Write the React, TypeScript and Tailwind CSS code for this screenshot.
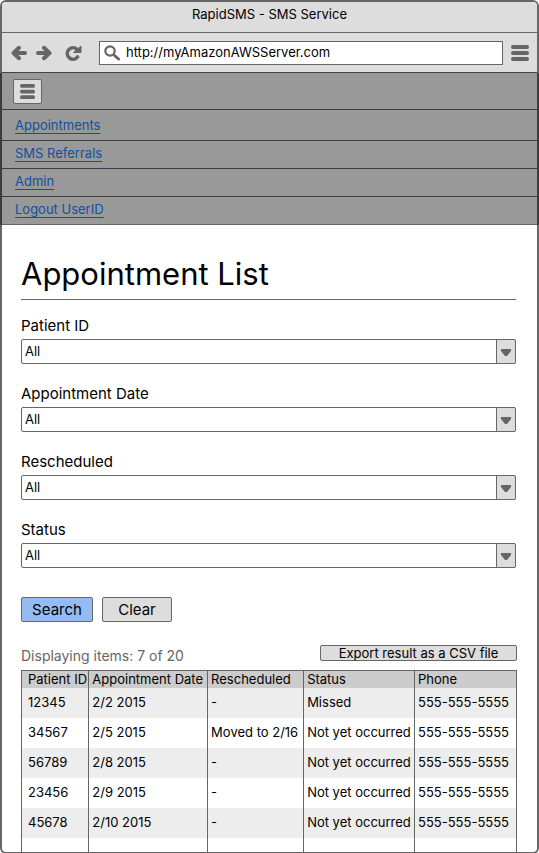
import { FC } from "react";

interface Appointment {
  patientId: string;
  date: string;
  rescheduled: string;
  status: string;
  phone: string;
}

const links = ["Appointments", "SMS Referrals", "Admin", "Logout UserID"];

const filters = ["Patient ID", "Appointment Date", "Rescheduled", "Status"];

const columns = [
  { name: "Patient ID", width: "w-[13.6%]" },
  { name: "Appointment Date", width: "w-[24%]" },
  { name: "Rescheduled", width: "w-[19.4%]" },
  { name: "Status", width: "w-[22.4%]" },
  { name: "Phone", width: "w-[20.6%]" },
];

const appointments: Appointment[] = [
  { patientId: "12345", date: "2/2 2015", rescheduled: "-", status: "Missed", phone: "555-555-5555" },
  { patientId: "34567", date: "2/5 2015", rescheduled: "Moved to 2/16", status: "Not yet occurred", phone: "555-555-5555" },
  { patientId: "56789", date: "2/8 2015", rescheduled: "-", status: "Not yet occurred", phone: "555-555-5555" },
  { patientId: "23456", date: "2/9 2015", rescheduled: "-", status: "Not yet occurred", phone: "555-555-5555" },
  { patientId: "45678", date: "2/10 2015", rescheduled: "-", status: "Not yet occurred", phone: "555-555-5555" },
];

const ArrowIcon: FC<{ className?: string }> = ({ className }) => (
  <svg
    viewBox="0 0 16 16"
    fill="none"
    stroke="#666"
    strokeWidth="4"
    strokeLinecap="round"
    strokeLinejoin="round"
    className={`h-4 w-4 ${className ?? ""}`}
  >
    <path d="M14 8H3M8 2.800L2.500 8 8 13.200" />
  </svg>
);

const ReloadIcon = () => (
  <svg viewBox="0 0 17 16" className="h-4 w-[17px]">
    <path d="M11.500 4A5.700 5.700 0 1 0 12.500 12" fill="none" stroke="#666" strokeWidth="3.600" strokeLinecap="round" />
    <path d="M16 1v6.500H8.500z" fill="#666" stroke="#666" strokeLinejoin="round" />
  </svg>
);

const SearchIcon = () => (
  <svg viewBox="0 0 16 16" fill="none" stroke="#666" className="h-4 w-4 shrink-0">
    <circle cx="6" cy="6" r="4.700" strokeWidth="2.200" />
    <path d="M10 10l4.500 4" strokeWidth="3" strokeLinecap="round" />
  </svg>
);

const MenuIcon: FC<{ className: string }> = ({ className }) => (
  <svg viewBox="0 0 18 16" preserveAspectRatio="none" className={className}>
    <rect y="0" width="18" height="4" rx="2" fill="#666" />
    <rect y="6" width="18" height="4" rx="2" fill="#666" />
    <rect y="12" width="18" height="4" rx="2" fill="#666" />
  </svg>
);

const BrowserBar = () => (
  <header className="rounded-t-sm bg-[#ddd]">
    <div className="h-[31px] border-b border-[#666] text-center leading-6">
      RapidSMS - SMS Service
    </div>
    <div className="flex h-10 items-center border-b border-[#444] pr-2 pl-[9px]">
      <button aria-label="Back">
        <ArrowIcon />
      </button>
      <button aria-label="Forward" className="ml-[9px]">
        <ArrowIcon className="rotate-180" />
      </button>
      <button aria-label="Reload" className="ml-[13px]">
        <ReloadIcon />
      </button>
      <label className="ml-[17px] flex h-6 min-w-0 flex-1 items-center gap-1 border border-[#666] bg-white px-1">
        <SearchIcon />
        <input
          type="text"
          aria-label="Address"
          defaultValue="http://myAmazonAWSServer.com"
          className="min-w-0 flex-1 px-[2px] outline-none"
        />
      </label>
      <button aria-label="Browser menu" className="ml-2">
        <MenuIcon className="h-4 w-[18px]" />
      </button>
    </div>
  </header>
);

const NavMenu = () => (
  <nav className="-mx-[2px] border-x-2 border-[#3d3d3d] bg-[#999]">
    <div className="flex h-[37px] items-center border-b border-[#3d3d3d] pl-[11px]">
      <button
        aria-label="Toggle menu"
        className="flex h-[25px] w-[29px] items-center justify-center rounded-[2px] border border-[#666] bg-[#ddd]"
      >
        <MenuIcon className="h-[15px] w-[15px]" />
      </button>
    </div>
    <ul>
      {links.map((link) => (
        <li
          key={link}
          className="h-7 border-b border-[#3d3d3d] pl-[13px] leading-[25px] first:h-[31px] first:pt-[3px] last:border-[#666]"
        >
          <a href="#" className="text-[#1150a0] underline underline-offset-[3px]">
            {link}
          </a>
        </li>
      ))}
    </ul>
  </nav>
);

const Filter: FC<{ label: string }> = ({ label }) => (
  <label className="block">
    <span className="block text-[15px] leading-5">{label}</span>
    <span className="relative mt-[3px] block">
      <select className="block h-[25px] w-full appearance-none rounded-[2px] border border-[#666] bg-white pr-6 pl-[3px]">
        <option>All</option>
      </select>
      <span className="pointer-events-none absolute inset-y-0 right-0 flex w-5 items-center justify-center rounded-r-[2px] border border-[#666] bg-[#ddd]">
        <svg viewBox="0 0 10 7" className="mt-[2px] h-[7px] w-[10px]">
          <path d="M0 0h10v2L6 7H4L0 2z" fill="#666" />
        </svg>
      </span>
    </span>
  </label>
);

const AppointmentTable = () => (
  <table className="mt-1 w-full table-fixed border-collapse border-x border-t border-[#666]">
    <thead>
      <tr className="h-[17px] bg-[#ccc] leading-4">
        {columns.map((column) => (
          <th
            key={column.name}
            className={`${column.width} border-x border-[#666] pl-[3px] text-left font-normal whitespace-nowrap first:pl-[6px]`}
          >
            {column.name}
          </th>
        ))}
      </tr>
    </thead>
    <tbody>
      {appointments.map((row) => (
        <tr key={row.patientId} className="h-[30px] odd:bg-[#ededed]">
          {[row.patientId, row.date, row.rescheduled, row.status, row.phone].map((value, i) => (
            <td key={i} className="border-x border-[#666] pl-[3px] whitespace-nowrap first:pl-[6px]">
              {value}
            </td>
          ))}
        </tr>
      ))}
      <tr className="h-[14px]">
        {columns.map((column) => (
          <td key={column.name} className="border-x border-[#666]" />
        ))}
      </tr>
    </tbody>
  </table>
);

export default function App() {
  return (
    <div className="min-h-screen rounded-md border-2 border-[#666] bg-white font-['Inter','Liberation_Sans',sans-serif] text-[13px] text-black">
      <BrowserBar />
      <NavMenu />
      <main className="pr-5 pl-[19px]">
        <div className="pr-px">
          <h1 className="border-b border-[#666] pt-[31px] pb-[7px] text-[31px] leading-9">
            Appointment List
          </h1>
          <form className="mt-4 flex flex-col gap-5">
            {filters.map((filter) => (
              <Filter key={filter} label={filter} />
            ))}
          </form>
        </div>
        <div className="mt-[29px] flex gap-[9px]">
          <button className="h-[25px] w-[72px] rounded-[2px] border border-[#666] bg-[#94bbf2] text-[15px] leading-5">
            Search
          </button>
          <button className="h-[25px] w-[70px] rounded-[2px] border border-[#666] bg-[#ddd] text-[15px] leading-5">
            Clear
          </button>
        </div>
        <div className="mt-[23px] flex items-start justify-between">
          <p className="mt-[1px] text-sm leading-5 text-[#666]">Displaying items: 7 of 20</p>
          <button className="h-4 w-[197px] rounded-[2px] border border-[#666] bg-[#ddd] leading-[14px]">
            Export result as a CSV file
          </button>
        </div>
        <AppointmentTable />
      </main>
    </div>
  );
}
